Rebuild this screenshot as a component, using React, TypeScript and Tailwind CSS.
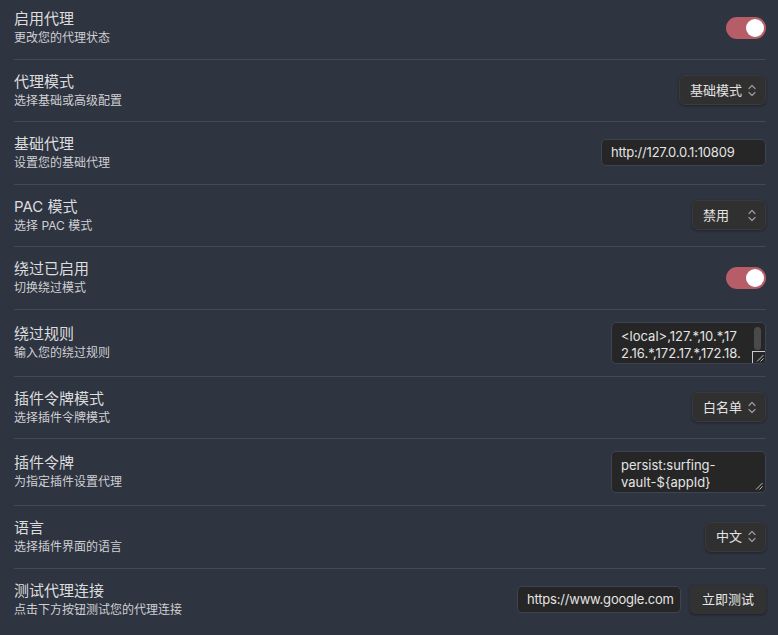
import React from "react";

const font = { fontFamily: '"Inter", "Noto Sans CJK SC", sans-serif' };

function Chevrons() {
    return (
        <svg width="8" height="13" viewBox="0 0 8 13" fill="none" stroke="#9a9a9a" strokeWidth="1.2" strokeLinecap="round" strokeLinejoin="round">
            <path d="M1 4.5 L4 1.5 L7 4.5" />
            <path d="M1 8.5 L4 11.5 L7 8.5" />
        </svg>
    );
}

function Grip() {
    return (
        <svg width="8" height="8" viewBox="0 0 8 8" stroke="#bdbdbd" strokeWidth="1">
            <path d="M7.5 1 L1 7.5" />
            <path d="M7.5 4.5 L4.5 7.5" />
        </svg>
    );
}

function Toggle() {
    return (
        <div className="w-[40px] h-[22px] rounded-full bg-[#b65d67] flex items-center justify-end pr-[2px]">
            <div className="w-[18px] h-[18px] rounded-full bg-white" />
        </div>
    );
}

function Select({ label, width }: { label: string; width: string }) {
    return (
        <div
            className={`${width} h-[30px] rounded-[6px] bg-[#303030] border border-[#3a3a3a] shadow-[0_1px_3px_rgba(0,0,0,0.35)] flex items-center justify-between pl-[10px] pr-[9px] text-[13px] text-[#e4e4e4]`}
        >
            <span>{label}</span>
            <Chevrons />
        </div>
    );
}

function TextInput({ value, width }: { value: string; width: string }) {
    return (
        <div
            className={`${width} h-[27px] rounded-[5px] bg-[#262626] border border-[#3d4350] flex items-center px-[9px] text-[13px] tracking-[-0.2px] text-[#e4e4e4]`}
        >
            {value}
        </div>
    );
}

function TextArea({ lines, scroll }: { lines: string[]; scroll?: boolean }) {
    return (
        <div className="relative w-[155px] h-[42px] rounded-[5px] bg-[#262626] border border-[#3d4350] pl-[9px] pr-[14px] pt-[5px] text-[13px] leading-[17px] text-[#e4e4e4] overflow-hidden">
            {lines.map((l) => (
                <div key={l} className="whitespace-nowrap overflow-hidden">
                    {l}
                </div>
            ))}
            {scroll ? (
                <>
                    <div className="absolute right-[4px] top-[4px] w-[7px] h-[23px] rounded-full bg-[#4a4a4a]" />
                    <div className="absolute right-0 bottom-0 w-[13px] h-[12px] border-l border-t border-[#c8c8c8] bg-[#262626] flex items-end justify-end p-[1px]">
                        <Grip />
                    </div>
                </>
            ) : (
                <div className="absolute right-[2px] bottom-[2px]">
                    <Grip />
                </div>
            )}
        </div>
    );
}

function Row({
    title,
    desc,
    first,
    children,
}: {
    title: string;
    desc: string;
    first?: boolean;
    children: React.ReactNode;
}) {
    return (
        <div
            className={
                first
                    ? "flex items-center justify-between pt-[9px] pb-3"
                    : "flex items-center justify-between border-t border-[#434958] py-3"
            }
        >
            <div>
                <div className="text-[15px] leading-[20px] text-[#dcdddf]">{title}</div>
                <div className="text-[12px] leading-[17.5px] text-[#cfd0d3]">{desc}</div>
            </div>
            {children}
        </div>
    );
}

export default function App() {
    return (
        <div className="min-h-screen bg-[#2e3440] pl-[14px] pr-[12px]" style={font}>
            <Row title="启用代理" desc="更改您的代理状态" first>
                <Toggle />
            </Row>
            <Row title="代理模式" desc="选择基础或高级配置">
                <Select label="基础模式" width="w-[87px]" />
            </Row>
            <Row title="基础代理" desc="设置您的基础代理">
                <TextInput value="http://127.0.0.1:10809" width="w-[165px]" />
            </Row>
            <Row title="PAC 模式" desc="选择 PAC 模式">
                <Select label="禁用" width="w-[74px]" />
            </Row>
            <Row title="绕过已启用" desc="切换绕过模式">
                <Toggle />
            </Row>
            <Row title="绕过规则" desc="输入您的绕过规则">
                <TextArea lines={["<local>,127.*,10.*,17", "2.16.*,172.17.*,172.18."]} scroll />
            </Row>
            <Row title="插件令牌模式" desc="选择插件令牌模式">
                <Select label="白名单" width="w-[74px]" />
            </Row>
            <Row title="插件令牌" desc="为指定插件设置代理">
                <TextArea lines={["persist:surfing-", "vault-${appId}"]} />
            </Row>
            <Row title="语言" desc="选择插件界面的语言">
                <Select label="中文" width="w-[61px]" />
            </Row>
            <Row title="测试代理连接" desc="点击下方按钮测试您的代理连接">
                <div className="flex items-center gap-[9px]">
                    <TextInput value="https://www.google.com" width="w-[164px]" />
                    <div className="w-[76px] h-[29px] rounded-[5px] bg-[#323232] shadow-[0_1px_3px_rgba(0,0,0,0.4)] flex items-center justify-center text-[13px] text-[#e8e8e8]">
                        立即测试
                    </div>
                </div>
            </Row>
        </div>
    );
}
